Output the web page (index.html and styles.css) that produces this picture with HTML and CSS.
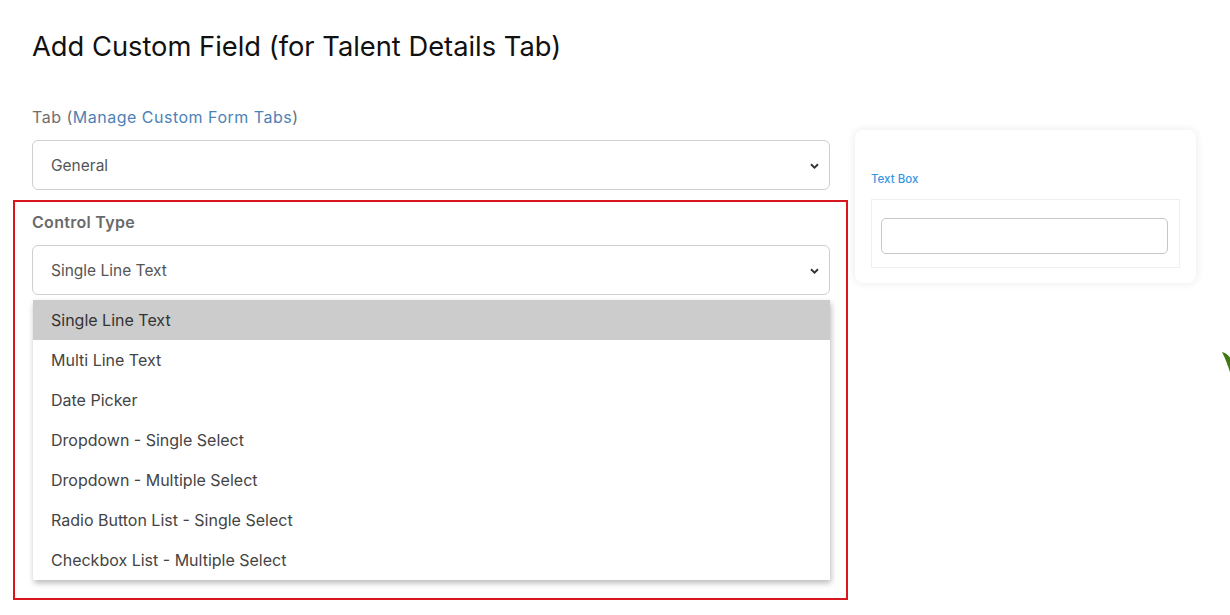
FILE: index.html
```html
<!DOCTYPE html>
<html lang="en">
<head>
<meta charset="utf-8">
<title>Add Custom Field</title>
<link rel="stylesheet" href="styles.css">
</head>
<body>
<main class="page">
  <h1 class="title">Add Custom Field (for Talent Details Tab)</h1>
  <div class="content">
    <div class="form-col">
      <div class="field">
        <label class="label">Tab (<a class="link" href="#">Manage Custom Form Tabs</a>)</label>
        <div class="select">
          <span class="select-text">General</span>
          <svg class="chevron" width="9" height="6" viewBox="0 0 9 6"><path d="M1 1.2 L4.5 4.6 L8 1.2" fill="none" stroke="#333" stroke-width="1.9"/></svg>
        </div>
      </div>
      <div class="field highlight">
        <label class="label strong">Control Type</label>
        <div class="select">
          <span class="select-text">Single Line Text</span>
          <svg class="chevron" width="9" height="6" viewBox="0 0 9 6"><path d="M1 1.2 L4.5 4.6 L8 1.2" fill="none" stroke="#333" stroke-width="1.9"/></svg>
        </div>
        <ul class="menu">
          <li class="option active">Single Line Text</li>
          <li class="option">Multi Line Text</li>
          <li class="option">Date Picker</li>
          <li class="option">Dropdown - Single Select</li>
          <li class="option">Dropdown - Multiple Select</li>
          <li class="option">Radio Button List - Single Select</li>
          <li class="option">Checkbox List - Multiple Select</li>
        </ul>
      </div>
    </div>
    <aside class="preview">
      <div class="preview-label">Text Box</div>
      <div class="preview-box">
        <div class="preview-input"></div>
      </div>
    </aside>
  </div>
  <svg class="leaf" width="10" height="30" viewBox="0 0 10 30"><path d="M1 2 C5 3 9 6 10 10 L10 26 C8 18 5 10 1 2 Z" fill="#3d7a12"/></svg>
</main>
</body>
</html>
```

FILE: styles.css
```css
* { box-sizing: border-box; }

html, body {
  margin: 0;
  padding: 0;
  background: #ffffff;
}

body {
  font-family: Inter, "Noto Sans", "Liberation Sans", sans-serif;
  color: #333;
  overflow: hidden;
}

.page {
  position: relative;
  width: 1230px;
  height: 615px;
  padding: 30px 0 0 32px;
}

.title {
  margin: 0 0 43px 0;
  font-size: 27.3px;
  line-height: 34px;
  font-weight: 400;
  color: #111;
}

.content {
  display: flex;
  align-items: flex-start;
  gap: 25px;
}

.form-col {
  width: 798px;
  display: flex;
  flex-direction: column;
}

.field {
  display: flex;
  flex-direction: column;
}

.label {
  font-size: 16px;
  line-height: 20px;
  letter-spacing: 0.5px;
  color: #6f6f6f;
  margin-bottom: 13px;
}

.label.strong {
  font-weight: 600;
  letter-spacing: 0.3px;
  color: #6a6a6a;
  margin-bottom: 13px;
}

.link {
  color: #4d82b6;
  text-decoration: none;
}

.select {
  height: 50px;
  border: 1px solid #cfcfcf;
  border-radius: 6px;
  background: #fff;
  display: flex;
  align-items: center;
  justify-content: space-between;
  padding: 0 10px 0 18px;
}

.select-text {
  font-size: 15.5px;
  color: #555;
}

.chevron {
  display: block;
  margin-top: 1px;
}

.highlight {
  margin: 10px -18px 0 -19px;
  border: 2px solid #d9161d;
  padding: 10px 16px 18px 17px;
}

.menu {
  list-style: none;
  margin: 5px 0 0 1px;
  padding: 0;
  background: #fff;
  box-shadow: 1px 3px 6px rgba(0, 0, 0, 0.28);
}

.option {
  height: 40px;
  display: flex;
  align-items: center;
  padding-left: 18px;
  font-size: 16px;
  color: #444;
}

.option.active {
  background: #cccccc;
  color: #333;
}

.preview {
  width: 341px;
  margin-top: 23px;
  background: #fff;
  border-radius: 8px;
  box-shadow: 0 0 10px rgba(0, 0, 0, 0.09);
  padding: 42px 16px 15px 16px;
}

.preview-label {
  font-size: 11.5px;
  line-height: 14px;
  font-weight: 500;
  color: #3597e4;
  margin-bottom: 13px;
}

.preview-box {
  border: 1px solid #efefef;
  padding: 18px 11px 13px 9px;
}

.preview-input {
  height: 36px;
  border: 1px solid #c6c6c6;
  border-radius: 5px;
  background: #fff;
}

.leaf {
  position: absolute;
  left: 1221px;
  top: 350px;
}
```
